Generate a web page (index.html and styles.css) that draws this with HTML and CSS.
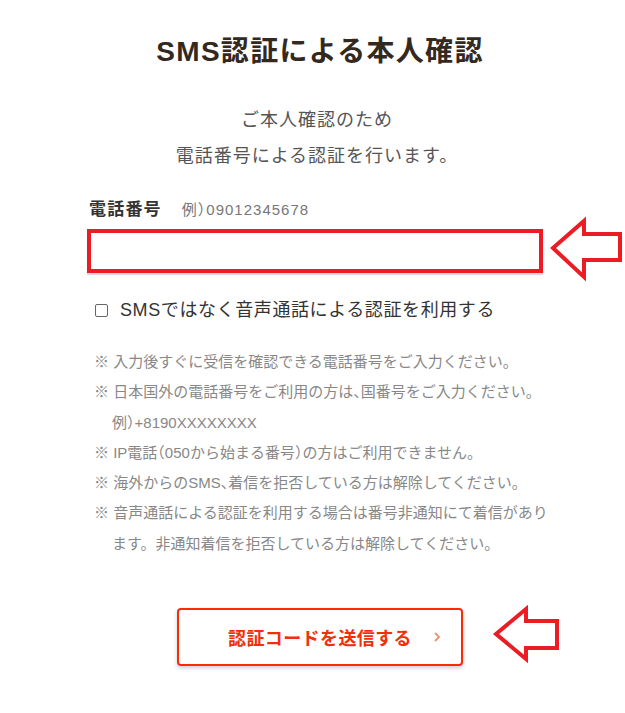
FILE: index.html
```html
<!DOCTYPE html>
<html lang="ja">
<head>
<meta charset="utf-8">
<title>SMS認証による本人確認</title>
<link rel="stylesheet" href="styles.css">
</head>
<body>
<main class="page">
  <h1 class="title">SMS認証による本人確認</h1>
  <p class="lead">ご本人確認のため<br>電話番号による認証を行います。</p>
  <div class="field-label">
    <span class="label">電話番号</span>
    <span class="example">例<span class="hw">）</span>09012345678</span>
  </div>
  <input class="phone" type="tel" aria-label="電話番号">
  <label class="check-row">
    <input class="check" type="checkbox">
    <span class="check-text">SMSではなく音声通話による認証を利用する</span>
  </label>
  <ul class="notes">
    <li>※ 入力後すぐに受信を確認できる電話番号をご入力ください。</li>
    <li>※ 日本国外の電話番号をご利用の方は<span class="hw">、</span>国番号をご入力ください。<br>例<span class="hw">）</span>+8190XXXXXXXX</li>
    <li>※ IP電話<span class="hw">（</span>050から始まる番号<span class="hw">）</span>の方はご利用できません。</li>
    <li>※ 海外からのSMS<span class="hw">、</span>着信を拒否している方は解除してください。</li>
    <li>※ 音声通話による認証を利用する場合は番号非通知にて着信があり<br>ます。非通知着信を拒否している方は解除してください。</li>
  </ul>
  <button class="send" type="button">
    <span class="send-text">認証コードを送信する</span>
    <svg class="chev" width="8" height="12" viewBox="0 0 8 12"><polyline points="2,2 6,6 2,10" fill="none" stroke="#f2927a" stroke-width="2"/></svg>
  </button>
</main>
<svg class="arrow arrow-1" width="76" height="66" viewBox="549 216 76 66">
  <polygon points="553,248 584,221 584,234 620,234 620,260 584,260 584,277" fill="#fff" stroke="#ec1c24" stroke-width="4" stroke-linejoin="miter"/>
</svg>
<svg class="arrow arrow-2" width="70" height="60" viewBox="492 604 70 60">
  <polygon points="496,634 526,609 526,621 557,621 557,648 526,648 526,659" fill="#fff" stroke="#ec1c24" stroke-width="4" stroke-linejoin="miter"/>
</svg>
</body>
</html>
```
FILE: styles.css
```css
html, body {
  margin: 0;
  padding: 0;
  background: #fff;
}
body {
  font-family: "Liberation Sans", "Noto Sans CJK JP", sans-serif;
  position: relative;
  min-height: 713px;
}
.page {
  width: 456px;
  margin-left: 87px;
  display: flex;
  flex-direction: column;
}
.title {
  margin: 32px 0 0;
  font-size: 28px;
  line-height: 40px;
  font-weight: bold;
  letter-spacing: 1.3px;
  color: #33291f;
  text-align: center;
  padding-left: 10px;
}
.lead {
  margin: 30px 0 0;
  font-size: 18px;
  line-height: 36px;
  letter-spacing: 1px;
  color: #555;
  text-align: center;
  padding-left: 4px;
}
.field-label {
  margin-top: 24px;
  padding-left: 2px;
  display: flex;
  align-items: center;
  gap: 20px;
  line-height: 24px;
}
.label {
  font-size: 17px;
  font-weight: bold;
  letter-spacing: 1.2px;
  color: #333;
}
.example {
  font-size: 15px;
  letter-spacing: 1px;
  color: #777;
}
.hw {
  font-feature-settings: "halt";
}
.phone {
  margin: 7px 0 0;
  box-sizing: border-box;
  width: 456px;
  height: 44px;
  border: 4px solid #ec1c24;
  border-radius: 0;
  background: #fff;
  box-shadow: 0 2px 1px rgba(0, 0, 0, 0.15);
  outline: none;
  padding: 0 10px;
  font-size: 16px;
}
.check-row {
  margin-top: 25px;
  padding-left: 8px;
  display: flex;
  align-items: center;
  gap: 12px;
  line-height: 24px;
}
.check {
  appearance: none;
  -webkit-appearance: none;
  margin: 0;
  width: 13px;
  height: 13px;
  border: 1px solid #666;
  border-radius: 2px;
  background: #fff;
  box-sizing: border-box;
}
.check-text {
  font-size: 18px;
  letter-spacing: 0.6px;
  color: #333;
}
.notes {
  list-style: none;
  margin: 25px 0 0;
  padding: 0 0 0 7px;
  font-size: 15px;
  line-height: 30.3px;
  color: #888;
}
.notes li {
  padding-left: 18px;
  text-indent: -18px;
  white-space: nowrap;
}
.send {
  margin: 49px 0 0 90px;
  box-sizing: border-box;
  width: 286px;
  height: 58px;
  border: 2px solid #ff2a00;
  border-radius: 4px;
  background: #fff;
  box-shadow: 0 2px 4px rgba(0, 0, 0, 0.2);
  display: grid;
  grid-template-columns: 1fr auto 1fr;
  align-items: center;
  padding: 0 20px 0 0;
  font-family: inherit;
  cursor: pointer;
}
.send-text {
  grid-column: 2;
  font-size: 18px;
  font-weight: bold;
  letter-spacing: 0.4px;
  color: #f0300a;
  padding-left: 20px;
}
.chev {
  grid-column: 3;
  justify-self: end;
}
.arrow {
  position: absolute;
}
.arrow-1 {
  left: 549px;
  top: 216px;
}
.arrow-2 {
  left: 492px;
  top: 604px;
}
```
